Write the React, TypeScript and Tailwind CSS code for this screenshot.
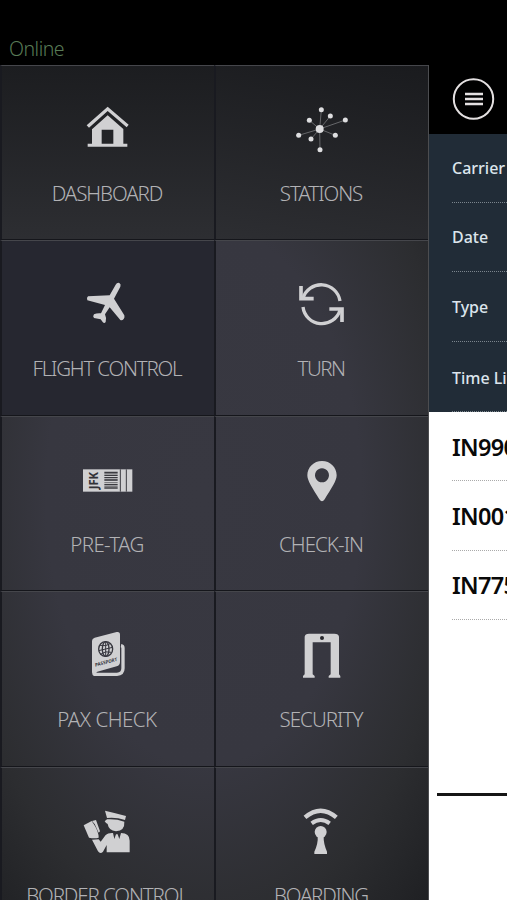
import type { ReactNode } from "react";

const FG = "#d0d0d2";

type Tile = {
  label: string;
  viewBox: string;
  spacing: string;
  icon: ReactNode;
  surface?: string;
};

const House = (
  <g fill={FG}>
    <path d="M260 286 L323 230 L386 284 L380 292 L323 243 L267 293 Z" />
    <path
      fillRule="evenodd"
      d="M276 298 L323 256 L370 297 V341 H382 V350 H263 V341 H276 Z M305 299 V341 H340 V299 Z"
    />
  </g>
);

const points = [
  [324, 149],
  [351, 168],
  [396, 180],
  [288, 181],
  [256, 226],
  [366, 226],
  [293, 237],
  [320, 269],
];

const Network = (
  <g fill="#dedee0">
    {points.map(([x, y]) => (
      <line key={`l${x}`} x1="319" y1="207" x2={x} y2={y} stroke="#66676a" strokeWidth="3" />
    ))}
    {points.map(([x, y]) => (
      <circle key={`c${x}`} cx={x} cy={y} r="7.500" />
    ))}
    <circle cx="319" cy="207" r="12" />
  </g>
);

const Plane = (
  <path
    fill={FG}
    d="M347 149 Q351 142 358 144 Q364 148 361 155 L342 191 L373 241 Q375 247 371 252 Q367 257 361 255 L329 217 L315 238 Q320 248 317 261 Q313 267 308 261 L302 253 L282 249 Q277 244 282 238 Q290 234 303 235 L315 210 L262 196 Q258 190 264 184 L329 181 Z"
  />
);

const Turn = (
  <g fill="none" stroke={FG} strokeWidth="10">
    <path d="M269 190 A57 57 0 0 1 380 198" />
    <path d="M269 216 A57 57 0 0 0 380 226" />
    <path d="M263 153 V191 H301" strokeWidth="11" />
    <path d="M386 261 V222 H348" strokeWidth="11" />
  </g>
);

const Tag = (
  <g>
    <rect x="249" y="175" width="148" height="67" fill={FG} />
    <g stroke="#3b3b40">
      <path d="M361 175 V242 M379 175 V242" strokeWidth="3" />
      <path d="M313 184 H353 M313 193 H353 M313 200 H353 M313 221 H353 M313 231 H353" strokeWidth="4" />
      <path d="M313 207 H353" strokeWidth="5" />
      <path d="M313 188 H353 M313 215 H353 M313 226 H353" strokeWidth="2" />
    </g>
    <text
      transform="translate(294 235) rotate(-90)"
      fontFamily="Noto Sans, sans-serif"
      fontWeight="700"
      fontSize="36"
      textLength="52"
      lengthAdjust="spacingAndGlyphs"
      fill="#333338"
    >
      JFK
    </text>
  </g>
);

const Pin = (
  <path
    fill={FG}
    fillRule="evenodd"
    d="M326 150 C301 150 282 169 282 193 C282 210 298 232 318 265 Q326 277 334 265 C354 232 370 210 370 193 C370 169 351 150 326 150 Z M326 172 A21 21 0 1 1 325.900 172 Z"
  />
);

const Passport = (
  <g>
    <path
      d="M282 266 H351 Q369 265 369 248 V187 Q369 181 363 180"
      fill="none"
      stroke={FG}
      strokeWidth="10"
    />
    <path
      d="M276 166 Q276 159 284 156 L350 139 Q360 137 360 147 V229 Q360 239 350 242 L292 258 Q288 260 288 266 L282 271 Q276 268 276 260 Z"
      fill={FG}
    />
    <g fill="none" stroke="#37373f" strokeWidth="4">
      <ellipse cx="317" cy="190" rx="21" ry="22" />
      <ellipse cx="317" cy="190" rx="10" ry="22" />
      <path d="M317 168 V212 M296 195 L338 185 M300 179 Q317 184 333 173 M301 206 Q317 194 334 200" strokeWidth="3" />
    </g>
    <text
      transform="translate(286 243) rotate(-15) skewX(-8)"
      fontFamily="Noto Sans, sans-serif"
      fontWeight="700"
      fontSize="14"
      textLength="68"
      lengthAdjust="spacingAndGlyphs"
      fill="#37373f"
    >
      PASSPORT
    </text>
  </g>
);

const Gate = (
  <g>
    <path
      fill={FG}
      d="M274 153 Q275 144 287 144 H363 Q376 144 377 153 V266 L381 271 V276 H346 V271 L352 266 V170 H298 V266 L304 271 V276 H269 V271 L274 266 Z"
    />
    <circle cx="326" cy="157" r="6" fill="#28282d" />
  </g>
);

const Officer = (
  <g fill={FG}>
    <path d="M315 150 Q346 157 378 166 L375 178 Q348 169 321 172 Z" />
    <path d="M321 176 Q348 174 373 183 Q375 210 348 212 Q326 210 323 190 Q318 188 314 182 Z" />
    <path d="M251 194 L275 181 L283 193 Q296 213 296 231 Q284 234 267 231 Z" />
    <path d="M276 181 L288 178 L300 212 L296 216 L284 190 Z" />
    <path d="M276 237 L296 236 L302 243 L317 223 Q324 216 339 217 L343 235 L348 221 H353 L358 235 L363 217 Q389 217 389 240 V275 H320 V253 L309 273 Q301 282 294 272 Z" />
  </g>
);

const Beacon = (
  <g>
    <path d="M276 170 Q323 130 370 170" fill="none" stroke={FG} strokeWidth="13" />
    <path d="M296 188 Q323 168 350 188" fill="none" stroke={FG} strokeWidth="12" />
    <circle cx="323" cy="214" r="18" fill={FG} />
    <path fill={FG} d="M314 226 H332 Q331 248 342 273 V280 H304 V273 Q316 248 314 226 Z" />
  </g>
);

const tiles: Tile[] = [
  {
    label: "DASHBOARD",
    viewBox: "231 210 180 180",
    spacing: "tracking-[-1.1px]",
    icon: House,
    surface: "bg-linear-to-b from-[#1c1d20] to-[#2d2e32]",
  },
  {
    label: "STATIONS",
    viewBox: "233 120 180 180",
    spacing: "tracking-[-1.05px]",
    icon: Network,
    surface: "bg-linear-[190deg] from-[#1a1b1e] to-[#2d2e32]",
  },
  {
    label: "FLIGHT CONTROL",
    viewBox: "231 120 180 180",
    spacing: "tracking-[-1.2px]",
    icon: Plane,
    surface: "bg-[#262730]",
  },
  { label: "TURN", viewBox: "233 120 180 180", spacing: "tracking-[-1.5px]", icon: Turn },
  { label: "PRE-TAG", viewBox: "231 120 180 180", spacing: "tracking-[-0.65px]", icon: Tag },
  { label: "CHECK-IN", viewBox: "233 120 180 180", spacing: "tracking-[-0.95px]", icon: Pin },
  { label: "PAX CHECK", viewBox: "231 121 180 180", spacing: "tracking-[-0.5px]", icon: Passport },
  { label: "SECURITY", viewBox: "233 121 180 180", spacing: "tracking-[-0.95px]", icon: Gate },
  { label: "BORDER CONTROL", viewBox: "231 124 180 180", spacing: "tracking-[-1.1px]", icon: Officer },
  { label: "BOARDING", viewBox: "234 124 180 180", spacing: "tracking-[-1.25px]", icon: Beacon },
];

function MenuTile({ tile }: { tile: Tile }) {
  return (
    <button
      className={`flex flex-col items-center border-t border-b border-l-2 border-t-[#45464b] border-b-[#15161b] border-l-[#191a20] pt-[34px] pr-[2px] ${
        tile.surface ?? ""
      }`}
    >
      <svg viewBox={tile.viewBox} className="h-[60px] w-[60px] shrink-0">
        {tile.icon}
      </svg>
      <span
        className={`mt-[19px] text-[20.5px] leading-[28px] font-light whitespace-nowrap text-[#b2b2b5] ${tile.spacing}`}
      >
        {tile.label}
      </span>
    </button>
  );
}

const filters = [
  { name: "Carrier", size: "h-[69px]" },
  { name: "Date", size: "h-[69px]" },
  { name: "Type", size: "h-[70px]" },
  { name: "Time Limit", size: "h-[70px] pt-[2px]" },
];
const flights = ["IN990", "IN001", "IN775"];

export default function App() {
  return (
    <div className="flex h-[900px] w-[507px] flex-col overflow-hidden bg-black font-['Noto_Sans','Open_Sans',sans-serif]">
      <header className="h-[65px] shrink-0 bg-black pt-[35px] pl-[9px] text-[19.5px] leading-[27px] font-light tracking-[-0.5px] text-[#587b56]">
        Online
      </header>
      <div className="flex h-[835px]">
        <nav className="grid w-[429px] shrink-0 auto-rows-[175.4px] grid-cols-[214px_214px] overflow-hidden border-r border-r-[#4c4d50] bg-[radial-gradient(ellipse_350px_600px_at_204px_430px,#383841_0%,#373740_45%,#2c2d30_72%,#1b1c1f_100%)]">
          {tiles.map((tile) => (
            <MenuTile key={tile.label} tile={tile} />
          ))}
        </nav>
        <main className="flex w-[78px] shrink-0 flex-col overflow-hidden bg-white">
          <div className="h-[69px] shrink-0 bg-black pt-[13px] pl-[23px]">
            <svg viewBox="0 0 44 44" className="h-[44px] w-[44px]" fill="none" stroke="#e4e0e1">
              <circle cx="21.500" cy="21" r="19.700" strokeWidth="2" />
              <path d="M13 16 H31 M13 21 H31 M13 26 H31" strokeWidth="2.500" />
            </svg>
          </div>
          <div className="h-[278px] shrink-0 bg-[#212c37] pl-[23px]">
            {filters.map(({ name, size }) => (
              <div
                key={name}
                className={`flex items-center border-b border-dotted border-[#7b858d] text-[16px] font-medium whitespace-nowrap text-[#dce5ec] ${size}`}
              >
                {name}
              </div>
            ))}
          </div>
          <div className="h-[381px] shrink-0 pl-[23px]">
            {flights.map((flight) => (
              <div
                key={flight}
                className="flex h-[69.4px] items-center border-b border-dotted border-[#aaaaaa] pt-[2px] text-[23.5px] font-semibold tracking-[-0.7px] text-[#090909]"
              >
                {flight}
              </div>
            ))}
          </div>
          <div className="ml-[8px] h-[3px] shrink-0 bg-[#161616]" />
        </main>
      </div>
    </div>
  );
}
